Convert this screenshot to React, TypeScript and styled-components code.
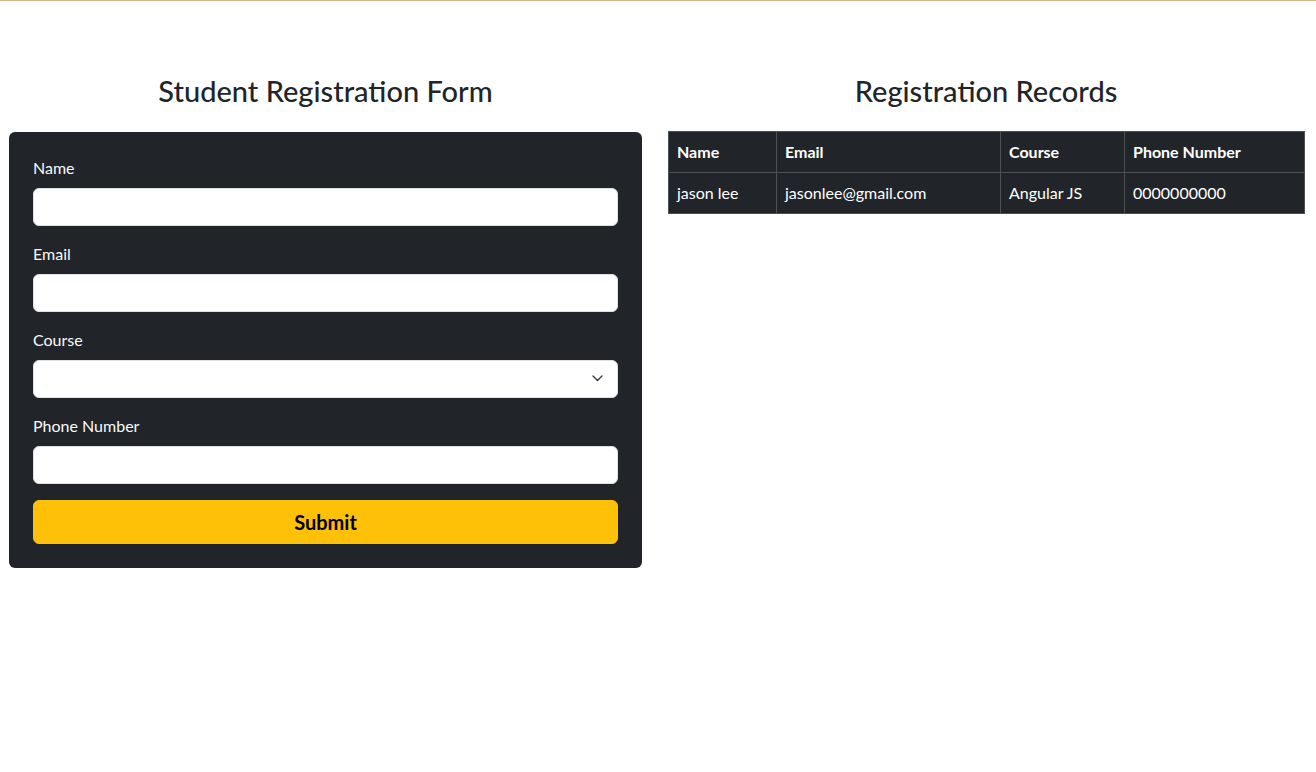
import React from "react";
import styled, { createGlobalStyle } from "styled-components";

const GlobalStyle = createGlobalStyle`
  * { box-sizing: border-box; }
  body {
    margin: 0;
    background: #fff;
    color: #212529;
    font-family: Lato, "Noto Sans", "Liberation Sans", sans-serif;
    font-size: 16px;
    line-height: 1.5;
  }
`;

const Page = styled.div`
  border-top: 1px solid #d6b48a;
  min-height: 772px;
  display: grid;
  grid-template-columns: 633px 636px;
  column-gap: 26px;
  align-items: start;
  padding: 73px 12px 0 9px;
`;

const Column = styled.section`
  display: flex;
  flex-direction: column;
`;

const Heading = styled.h3`
  margin: 0 0 24px;
  font-size: 29px;
  font-weight: 500;
  line-height: 34px;
  text-align: center;
  color: #212529;
`;

const Card = styled.form`
  background: #212529;
  border-radius: 6px;
  padding: 24px;
  display: flex;
  flex-direction: column;
`;

const Field = styled.div`
  display: flex;
  flex-direction: column;
  margin-bottom: 16px;
`;

const Label = styled.label`
  color: #f8f9fa;
  font-size: 16px;
  line-height: 24px;
  margin-bottom: 8px;
`;

const TextInput = styled.input`
  height: 38px;
  width: 100%;
  border: 1px solid #dee2e6;
  border-radius: 6px;
  background: #fff;
  padding: 6px 12px;
  font: inherit;
  outline: none;
`;

const SelectWrap = styled.div`
  position: relative;
`;

const Select = styled.select`
  appearance: none;
  height: 38px;
  width: 100%;
  border: 1px solid #dee2e6;
  border-radius: 6px;
  background: #fff;
  padding: 6px 36px 6px 12px;
  font: inherit;
  outline: none;
`;

const Chevron = styled.svg`
  position: absolute;
  right: 15px;
  top: 15px;
  width: 11px;
  height: 7px;
  pointer-events: none;
`;

const SubmitButton = styled.button`
  height: 44px;
  width: 100%;
  border: 1px solid #ffc107;
  border-radius: 6px;
  background: #ffc107;
  color: #000;
  font: inherit;
  font-size: 20px;
  font-weight: 700;
  line-height: 30px;
  cursor: pointer;
`;

const Table = styled.table`
  width: 100%;
  table-layout: fixed;
  border-collapse: collapse;
  background: #212529;
  color: #fff;
  margin-top: -1px;
`;

const Th = styled.th`
  border: 1px solid #4d5154;
  padding: 8px;
  text-align: left;
  font-weight: 700;
  line-height: 24px;
`;

const Td = styled.td`
  border: 1px solid #4d5154;
  padding: 8px;
  line-height: 24px;
  white-space: nowrap;
`;

const columns = [
  { key: "name", label: "Name", width: 108 },
  { key: "email", label: "Email", width: 224 },
  { key: "course", label: "Course", width: 124 },
  { key: "phone", label: "Phone Number", width: 180 },
] as const;

const records = [
  {
    name: "jason lee",
    email: "jasonlee@gmail.com",
    course: "Angular JS",
    phone: "0000000000",
  },
];

export default function App() {
  return (
    <>
      <GlobalStyle />
      <Page>
        <Column>
          <Heading>Student Registration Form</Heading>
          <Card onSubmit={(e) => e.preventDefault()}>
            <Field>
              <Label htmlFor="name">Name</Label>
              <TextInput id="name" type="text" />
            </Field>
            <Field>
              <Label htmlFor="email">Email</Label>
              <TextInput id="email" type="email" />
            </Field>
            <Field>
              <Label htmlFor="course">Course</Label>
              <SelectWrap>
                <Select id="course" defaultValue="">
                  <option value=""></option>
                  <option value="Angular JS">Angular JS</option>
                  <option value="React JS">React JS</option>
                  <option value="Vue JS">Vue JS</option>
                </Select>
                <Chevron viewBox="0 0 11 7">
                  <path
                    d="M1 1l4.5 4.5L10 1"
                    fill="none"
                    stroke="#343a40"
                    strokeWidth="1.4"
                    strokeLinecap="round"
                    strokeLinejoin="round"
                  />
                </Chevron>
              </SelectWrap>
            </Field>
            <Field>
              <Label htmlFor="phone">Phone Number</Label>
              <TextInput id="phone" type="tel" />
            </Field>
            <SubmitButton type="submit">Submit</SubmitButton>
          </Card>
        </Column>
        <Column>
          <Heading>Registration Records</Heading>
          <Table>
            <colgroup>
              {columns.map((c) => (
                <col key={c.key} style={{ width: c.width }} />
              ))}
            </colgroup>
            <thead>
              <tr>
                {columns.map((c) => (
                  <Th key={c.key}>{c.label}</Th>
                ))}
              </tr>
            </thead>
            <tbody>
              {records.map((r, i) => (
                <tr key={i}>
                  {columns.map((c) => (
                    <Td key={c.key}>{r[c.key]}</Td>
                  ))}
                </tr>
              ))}
            </tbody>
          </Table>
        </Column>
      </Page>
    </>
  );
}
